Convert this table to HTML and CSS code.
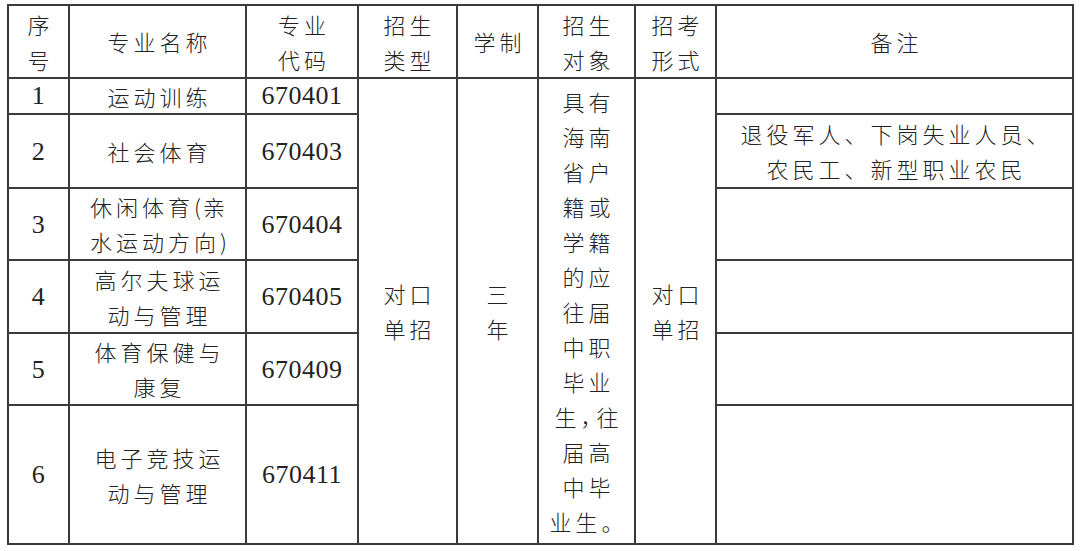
FILE: index.html
```html
<!DOCTYPE html>
<html lang="zh-CN">
<head>
<meta charset="utf-8">
<title>招生专业</title>
<link rel="stylesheet" href="styles.css">
</head>
<body>
<div class="page">
<table class="grid">
  <colgroup>
    <col class="c-no"><col class="c-name"><col class="c-code"><col class="c-type"><col class="c-len"><col class="c-who"><col class="c-exam"><col class="c-note">
  </colgroup>
  <tr class="r-head">
    <td>序<br>号</td>
    <td>专业名称</td>
    <td>专业<br>代码</td>
    <td>招生<br>类型</td>
    <td>学制</td>
    <td>招生<br>对象</td>
    <td>招考<br>形式</td>
    <td>备注</td>
  </tr>
  <tr class="r-1">
    <td class="num">1</td>
    <td>运动训练</td>
    <td class="num">670401</td>
    <td rowspan="6" class="tall">对口<br>单招</td>
    <td rowspan="6" class="tall">三<br>年</td>
    <td rowspan="6" class="tall who">具有<br>海南<br>省户<br>籍或<br>学籍<br>的应<br>往届<br>中职<br>毕业<br>生<span class="comma">，</span>往<br>届高<br>中毕<br>业生。</td>
    <td rowspan="6" class="tall">对口<br>单招</td>
    <td></td>
  </tr>
  <tr class="r-2">
    <td class="num">2</td>
    <td>社会体育</td>
    <td class="num">670403</td>
    <td>退役军人、下岗失业人员、<br>农民工、新型职业农民</td>
  </tr>
  <tr class="r-3">
    <td class="num">3</td>
    <td>休闲体育<span class="paren">(</span>亲<br>水运动方向<span class="paren">)</span></td>
    <td class="num">670404</td>
    <td></td>
  </tr>
  <tr class="r-4">
    <td class="num">4</td>
    <td>高尔夫球运<br>动与管理</td>
    <td class="num">670405</td>
    <td></td>
  </tr>
  <tr class="r-5">
    <td class="num">5</td>
    <td>体育保健与<br>康复</td>
    <td class="num">670409</td>
    <td></td>
  </tr>
  <tr class="r-6">
    <td class="num">6</td>
    <td>电子竞技运<br>动与管理</td>
    <td class="num">670411</td>
    <td></td>
  </tr>
</table>
</div>
</body>
</html>
```
FILE: styles.css
```css
html, body {
  margin: 0;
  padding: 0;
  background: #ffffff;
}
.page {
  padding: 4px 0 0 7px;
}
.grid {
  border-collapse: collapse;
  table-layout: fixed;
  width: 1067px;
  font-family: "Noto Sans CJK SC", "Noto Sans", sans-serif;
  font-weight: 300;
  font-size: 22px;
  line-height: 35px;
  letter-spacing: 4px;
  color: #222222;
}
.grid td {
  border: 2px solid #3a3a3a;
  padding: 0 0 0 4px;
  text-align: center;
  vertical-align: middle;
  white-space: nowrap;
  overflow: hidden;
}
.c-no { width: 61px; }
.c-name { width: 177px; }
.c-code { width: 112px; }
.c-type { width: 99px; }
.c-len { width: 81px; }
.c-who { width: 97px; }
.c-exam { width: 81px; }
.c-note { width: 357px; }
.r-head td { height: 71px; }
.r-1 td { height: 34px; line-height: 30px; }
.r-2 td { height: 72px; }
.r-3 td { height: 68px; }
.r-4 td { height: 71px; }
.r-5 td { height: 70px; }
.r-6 td { height: 137px; }
.grid td.tall {
  line-height: 35px;
}
.grid td.num {
  font-family: "Liberation Serif", "DejaVu Serif", serif;
  font-weight: 400;
  font-size: 26px;
  letter-spacing: 0.5px;
  padding-left: 0;
}
.comma {
  letter-spacing: -6px;
}
.paren {
  letter-spacing: 2px;
}
```
